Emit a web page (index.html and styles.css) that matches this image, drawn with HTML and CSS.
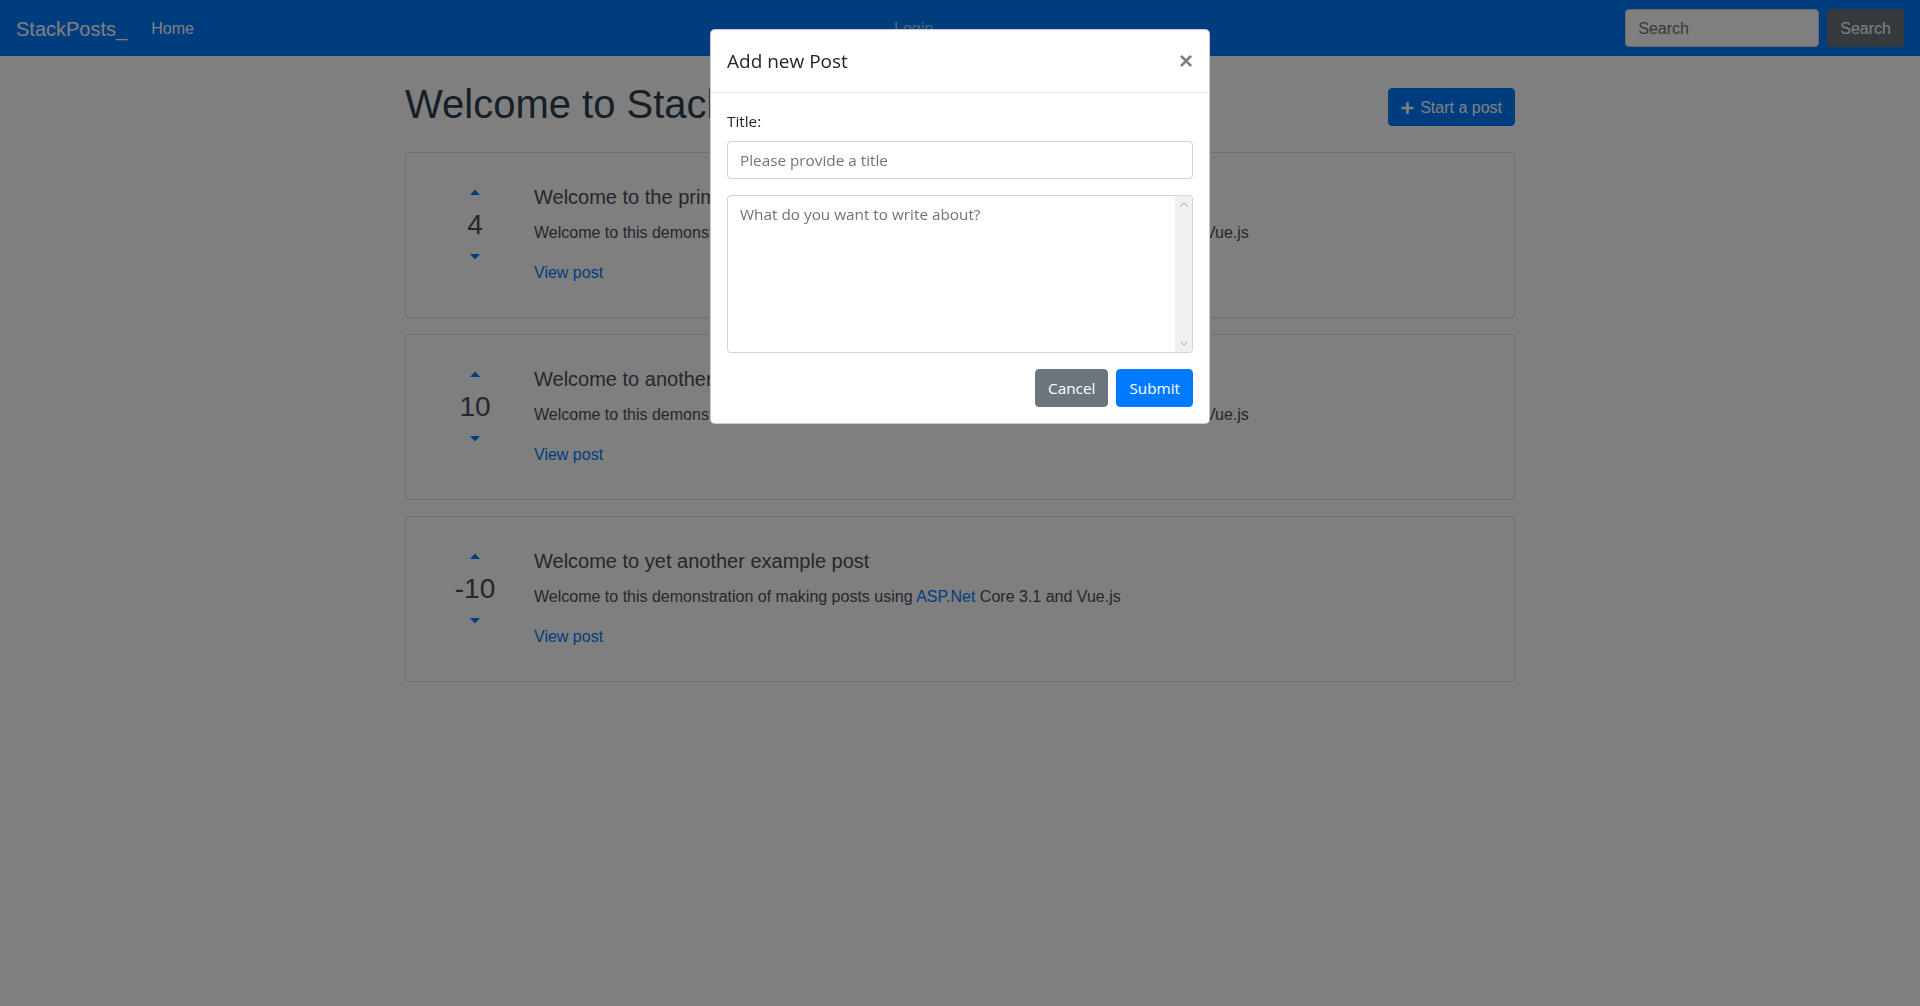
FILE: index.html
```html
<!DOCTYPE html>
<html lang="en">
<head>
<meta charset="utf-8">
<title>StackPosts_</title>
<link rel="stylesheet" href="styles.css">
</head>
<body>
<nav class="navbar">
  <a class="brand" href="#">StackPosts_</a>
  <div class="nav-collapse">
    <ul class="nav-list"><li><a class="nav-link" href="#">Home</a></li></ul>
    <ul class="nav-list"><li><a class="nav-link login" href="#">Login</a></li></ul>
    <form class="search-form">
      <input class="search-input" type="text" placeholder="Search">
      <button class="btn btn-secondary" type="button">Search</button>
    </form>
  </div>
</nav>

<main class="container">
  <div class="page-header">
    <h1 class="page-title">Welcome to StackPosts_</h1>
    <button class="btn btn-primary start-btn" type="button">
      <svg class="plus-icon" viewBox="0 0 448 512" width="13" height="14" aria-hidden="true"><path fill="currentColor" d="M416 208H272V64c0-17.670-14.330-32-32-32h-32c-17.670 0-32 14.330-32 32v144H32c-17.670 0-32 14.330-32 32v32c0 17.670 14.330 32 32 32h144v144c0 17.670 14.330 32 32 32h32c17.670 0 32-14.330 32-32V304h144c17.670 0 32-14.330 32-32v-32c0-17.670-14.330-32-32-32z"/></svg>
      <span>Start a post</span>
    </button>
  </div>

  <div class="card">
    <div class="card-body">
      <div class="vote">
        <svg class="caret caret-up" viewBox="0 0 12 6" width="12" height="6"><path d="M1 6 L6 0.6 L11 6 Z" fill="#007bff"/></svg>
        <div class="score">4</div>
        <svg class="caret caret-down" viewBox="0 0 12 6" width="12" height="6"><path d="M1 0 L6 5.4 L11 0 Z" fill="#007bff"/></svg>
      </div>
      <div class="post">
        <h5 class="post-title">Welcome to the primary example post</h5>
        <p class="post-text">Welcome to this demonstration of making posts and sharing them using <a href="#">ASP.Net</a> Core 3.1 and Vue.js</p>
        <a class="view-link" href="#">View post</a>
      </div>
    </div>
  </div>

  <div class="card">
    <div class="card-body">
      <div class="vote">
        <svg class="caret caret-up" viewBox="0 0 12 6" width="12" height="6"><path d="M1 6 L6 0.6 L11 6 Z" fill="#007bff"/></svg>
        <div class="score">10</div>
        <svg class="caret caret-down" viewBox="0 0 12 6" width="12" height="6"><path d="M1 0 L6 5.4 L11 0 Z" fill="#007bff"/></svg>
      </div>
      <div class="post">
        <h5 class="post-title">Welcome to another example post</h5>
        <p class="post-text">Welcome to this demonstration of making posts and sharing them using <a href="#">ASP.Net</a> Core 3.1 and Vue.js</p>
        <a class="view-link" href="#">View post</a>
      </div>
    </div>
  </div>

  <div class="card">
    <div class="card-body">
      <div class="vote">
        <svg class="caret caret-up" viewBox="0 0 12 6" width="12" height="6"><path d="M1 6 L6 0.6 L11 6 Z" fill="#007bff"/></svg>
        <div class="score">-10</div>
        <svg class="caret caret-down" viewBox="0 0 12 6" width="12" height="6"><path d="M1 0 L6 5.4 L11 0 Z" fill="#007bff"/></svg>
      </div>
      <div class="post">
        <h5 class="post-title">Welcome to yet another example post</h5>
        <p class="post-text">Welcome to this demonstration of making posts using <a href="#">ASP.Net</a> Core 3.1 and Vue.js</p>
        <a class="view-link" href="#">View post</a>
      </div>
    </div>
  </div>
</main>

<div class="backdrop"></div>

<div class="modal">
  <div class="modal-content">
    <div class="modal-header">
      <h5 class="modal-title">Add new Post</h5>
      <button class="close" type="button" aria-label="Close">&times;</button>
    </div>
    <div class="modal-body">
      <label class="field-label" for="title">Title:</label>
      <input id="title" class="form-control" type="text" placeholder="Please provide a title">
      <div class="textarea-wrap">
        <textarea class="form-control text-area" placeholder="What do you want to write about?"></textarea>
        <div class="fake-scrollbar">
          <div class="sb-btn"><svg viewBox="0 0 8 5" width="8" height="5"><polyline points="0.5,4.5 4,1 7.5,4.5" fill="none" stroke="#a6a6a6" stroke-width="1"/></svg></div>
          <div class="sb-btn"><svg viewBox="0 0 8 5" width="8" height="5"><polyline points="0.5,0.5 4,4 7.5,0.5" fill="none" stroke="#a6a6a6" stroke-width="1"/></svg></div>
        </div>
      </div>
      <div class="modal-actions">
        <button class="mbtn mbtn-secondary" type="button">Cancel</button>
        <button class="mbtn mbtn-primary" type="button">Submit</button>
      </div>
    </div>
  </div>
</div>
</body>
</html>
```

FILE: styles.css
```css
* { box-sizing: border-box; }

html, body {
  margin: 0;
  padding: 0;
}

body {
  font-family: "Liberation Sans", Arial, sans-serif;
  font-size: 16px;
  line-height: 1.5;
  color: #212529;
  background: #fff;
  height: 1006px;
  overflow: hidden;
}

a { color: #007bff; text-decoration: none; }

/* Navbar */
.navbar {
  display: flex;
  align-items: center;
  height: 56px;
  padding: 8px 16px;
  background: #007bff;
}

.brand {
  font-size: 20px;
  line-height: 30px;
  padding: 6px 0 4px;
  margin-right: 16px;
  color: #fff;
  white-space: nowrap;
}

.nav-collapse {
  flex: 1;
  display: flex;
  align-items: center;
  justify-content: space-between;
}

.nav-list {
  list-style: none;
  margin: 0;
  padding: 0;
  display: flex;
}

.nav-link {
  display: block;
  padding: 9px 8px 7px;
  color: #fff;
}

.nav-link.login { color: #9ad8e2; }

.search-form {
  display: flex;
  align-items: center;
}

.search-input {
  width: 194px;
  height: 38px;
  padding: 7px 12px 5px;
  margin-right: 8px;
  font-family: "Liberation Sans", Arial, sans-serif;
  font-size: 16px;
  color: #495057;
  background: #fff;
  border: 1px solid #ced4da;
  border-radius: 4px;
  outline: none;
}

.search-input::placeholder { color: #6c757d; }

.btn {
  display: inline-flex;
  align-items: center;
  height: 38px;
  padding: 6px 12px;
  font-family: "Liberation Sans", Arial, sans-serif;
  font-size: 16px;
  line-height: 24px;
  border: 1px solid transparent;
  border-radius: 4px;
  color: #fff;
  cursor: pointer;
}

.btn-secondary { background: #6c757d; border-color: #6c757d; padding-top: 7px; padding-bottom: 5px; }
.btn-primary { background: #007bff; border-color: #007bff; }

/* Main */
.container {
  width: 1110px;
  margin: 0 auto;
}

.page-header {
  display: flex;
  justify-content: space-between;
  align-items: flex-start;
  margin-top: 24px;
  margin-bottom: 24px;
}

.page-title {
  margin: 0;
  font-size: 40px;
  line-height: 48px;
  font-weight: 500;
  color: #2c3e50;
}

.start-btn {
  margin-top: 8px;
  gap: 6px;
  padding-top: 7px;
  padding-bottom: 5px;
}

.plus-icon { display: block; margin-top: -1px; }

.card {
  border: 1px solid rgba(0, 0, 0, 0.125);
  border-radius: 4px;
  margin-bottom: 16px;
  background: #fff;
  color: #495057;
}

.card-body {
  display: flex;
  padding: 32px;
}

.vote {
  width: 74px;
  display: flex;
  flex-direction: column;
  align-items: center;
}

.caret { display: block; }
.caret-up { margin-top: 4px; }

.score {
  margin-top: 12px;
  font-size: 28px;
  line-height: 36px;
}

.caret-down { margin-top: 11px; }

.post { margin-left: 22px; }

.post-title {
  margin: 0 0 12px;
  font-size: 20px;
  line-height: 24px;
  font-weight: 500;
}

.post-text { margin: 0 0 16px; }

.view-link { display: inline-block; }

/* Backdrop & modal */
.backdrop {
  position: fixed;
  inset: 0;
  background: rgba(0, 0, 0, 0.5);
}

.modal {
  position: fixed;
  inset: 0;
  display: flex;
  justify-content: center;
  align-items: flex-start;
  padding-top: 29px;
  font-family: "Open Sans", "Noto Sans", sans-serif;
}

.modal-content {
  width: 500px;
  background: #fff;
  border: 1px solid rgba(0, 0, 0, 0.2);
  border-radius: 5px;
}

.modal-header {
  display: flex;
  align-items: flex-start;
  justify-content: space-between;
  padding: 16px;
  border-bottom: 1px solid #dee2e6;
}

.modal-title {
  margin: 0;
  font-size: 19px;
  line-height: 30px;
  font-weight: 400;
  color: #212529;
}

.close {
  margin: -16px -16px -16px auto;
  padding: 19px 16px 13px;
  font-family: "Liberation Sans", Arial, sans-serif;
  font-size: 24px;
  font-weight: 700;
  line-height: 1;
  color: #000;
  opacity: 0.5;
  background: transparent;
  border: 0;
}

.modal-body { padding: 16px; }

.field-label {
  display: block;
  margin-bottom: 8px;
  font-size: 15.3px;
  line-height: 24px;
  color: #212529;
}

.form-control {
  display: block;
  width: 100%;
  height: 38px;
  padding: 6px 12px;
  font-family: "Open Sans", "Noto Sans", sans-serif;
  font-size: 15.3px;
  line-height: 24px;
  color: #495057;
  background: #fff;
  border: 1px solid #ced4da;
  border-radius: 4px;
  outline: none;
  margin: 0 0 16px;
}

.form-control::placeholder { color: #6c757d; }

.textarea-wrap {
  position: relative;
  margin-bottom: 16px;
}

.text-area {
  height: 158px;
  margin: 0;
  resize: none;
  overflow: hidden;
}

.fake-scrollbar {
  position: absolute;
  top: 1px;
  right: 1px;
  bottom: 1px;
  width: 17px;
  background: #f0f0f0;
  border-radius: 0 3px 3px 0;
  display: flex;
  flex-direction: column;
  justify-content: space-between;
}

.sb-btn {
  height: 17px;
  display: flex;
  align-items: center;
  justify-content: center;
}

.modal-actions {
  display: flex;
  justify-content: flex-end;
  gap: 8px;
}

.mbtn {
  height: 38px;
  padding: 6px 12px;
  font-family: "Open Sans", "Noto Sans", sans-serif;
  font-size: 15.3px;
  line-height: 24px;
  color: #fff;
  border: 1px solid transparent;
  border-radius: 4px;
}

.mbtn-secondary { background: #6c757d; border-color: #6c757d; }
.mbtn-primary { background: #007bff; border-color: #007bff; }
```
